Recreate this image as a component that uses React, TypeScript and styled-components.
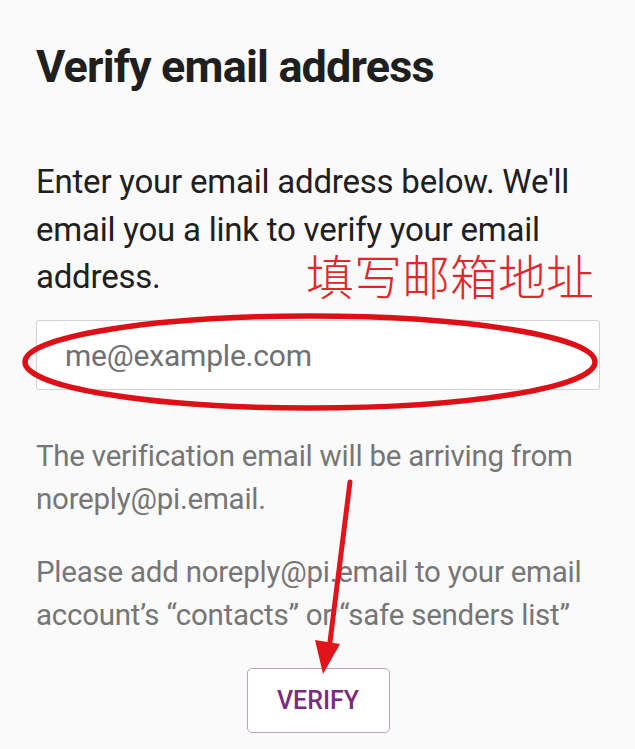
import React from "react";
import styled, { createGlobalStyle } from "styled-components";

const GlobalStyle = createGlobalStyle`
  html, body {
    margin: 0;
    padding: 0;
    background: #fafafa;
  }
  body {
    font-family: Roboto, "Noto Sans", "Liberation Sans", sans-serif;
    color: #212121;
  }
`;

const Page = styled.main`
  position: relative;
  width: 635px;
  min-height: 749px;
  box-sizing: border-box;
  padding: 40px 35px 0 36px;
  overflow: hidden;
`;

const Title = styled.h1`
  margin: 0;
  font-size: 45px;
  line-height: 54px;
  font-weight: 700;
  letter-spacing: -0.85px;
  color: #1f1f1f;
`;

const Lead = styled.p`
  margin: 64px 0 0;
  font-size: 33px;
  line-height: 47.5px;
  letter-spacing: -0.22px;
  color: #202020;
`;

const EmailInput = styled.input`
  display: block;
  width: 100%;
  height: 70px;
  margin-top: 19.5px;
  box-sizing: border-box;
  padding: 0 0 0 28px;
  border: 1px solid #d2d2d2;
  border-radius: 3px;
  background: #fff;
  font-family: inherit;
  font-size: 30px;
  letter-spacing: -0.2px;
  color: #333;
  outline: none;

  &::placeholder {
    color: #707070;
  }
`;

const Hint = styled.p<{ $gap: number }>`
  margin: ${(p) => p.$gap}px 0 0;
  font-size: 29.5px;
  line-height: 43.3px;
  letter-spacing: -0.24px;
  color: #767676;
`;

const Actions = styled.div`
  display: flex;
  justify-content: center;
  margin-top: 30px;
`;

const VerifyButton = styled.button`
  width: 143px;
  height: 65px;
  box-sizing: border-box;
  border: 1.5px solid #b9a4c1;
  border-radius: 5px;
  background: #fff;
  font-family: inherit;
  font-size: 25px;
  font-weight: 500;
  color: #7a2b7e;
  cursor: pointer;
`;

/* red hand-drawn markup that sits on top of the screenshot */
const Markup = styled.svg`
  position: absolute;
  left: 0;
  top: 0;
  pointer-events: none;
`;

const Note = styled.span`
  position: absolute;
  left: 306px;
  top: 250px;
  font-family: "Noto Sans CJK SC", "Noto Sans", sans-serif;
  font-size: 48px;
  font-weight: 300;
  line-height: 48px;
  color: #e3262b;
  white-space: nowrap;
`;

export default function App() {
  return (
    <>
      <GlobalStyle />
      <Page>
        <Title>Verify email address</Title>
        <Lead>
          Enter your email address below. We'll email you a link to verify
          your email address.
        </Lead>
        <EmailInput type="email" placeholder="me@example.com" />
        <Hint $gap={45}>
          The verification email will be arriving from noreply@pi.email.
        </Hint>
        <Hint $gap={29.5}>
          Please add noreply@pi.email to your email account’s “contacts” or
          “safe senders list”
        </Hint>
        <Actions>
          <VerifyButton type="button">VERIFY</VerifyButton>
        </Actions>

        <Note>填写邮箱地址</Note>
        <Markup width="635" height="749" viewBox="0 0 635 749">
          <ellipse
            cx="310"
            cy="362"
            rx="285"
            ry="46"
            fill="none"
            stroke="#dc1016"
            strokeWidth="5.5"
          />
          <line
            x1="350"
            y1="482"
            x2="329"
            y2="650"
            stroke="#e0141a"
            strokeWidth="5"
            strokeLinecap="round"
          />
          <polygon points="315,640 340,644 323,674" fill="#e0141a" />
        </Markup>
      </Page>
    </>
  );
}
